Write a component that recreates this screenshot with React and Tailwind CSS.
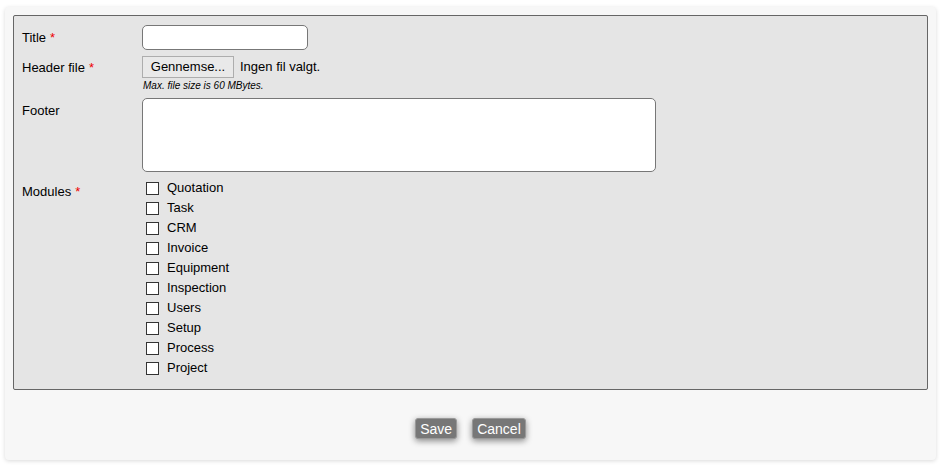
import React, { useState } from "react";

const MODULES = [
  "Quotation",
  "Task",
  "CRM",
  "Invoice",
  "Equipment",
  "Inspection",
  "Users",
  "Setup",
  "Process",
  "Project",
];

const Required = () => <span className="text-[#e00] ml-1">*</span>;

const App = () => {
  const [title, setTitle] = useState("");
  const [footer, setFooter] = useState("");
  const [modules, setModules] = useState([]);

  const toggleModule = (name) => {
    setModules((prev) =>
      prev.includes(name) ? prev.filter((m) => m !== name) : [...prev, name]
    );
  };

  return (
    <div className="min-h-screen bg-white pt-[7px] pl-[5px] pr-[6px] font-['Liberation_Sans',Arial,sans-serif] text-[13px] text-black">
      <div className="bg-[#f7f7f7] rounded-[4px] shadow-[0_1px_4px_rgba(0,0,0,0.15)] p-2 pb-[21px]">
        <fieldset className="bg-[#e5e5e5] border border-[#666] rounded-[2px] pl-2 pt-[9px] pb-[11px]">
          <div className="grid grid-cols-[120px_1fr] gap-y-[6px]">
            <label className="flex items-center">
              Title
              <Required />
            </label>
            <div>
              <input
                type="text"
                value={title}
                onChange={(e) => setTitle(e.target.value)}
                className="block w-[166px] h-[25px] bg-white border border-[#777] rounded-[5px] px-1 outline-none"
              />
            </div>

            <label className="pt-[2px]">
              Header file
              <Required />
            </label>
            <div>
              <div className="flex items-center">
                <button className="h-[22px] w-[92px] bg-[#e9e9e9] border border-[#adadad] text-[13px]">
                  Gennemse...
                </button>
                <span className="ml-[6px]">Ingen fil valgt.</span>
              </div>
              <p className="italic text-[10px] leading-[12px] mt-[2px] ml-px">
                Max. file size is 60 MBytes.
              </p>
            </div>

            <label className="pt-[3px]">Footer</label>
            <div>
              <textarea
                value={footer}
                onChange={(e) => setFooter(e.target.value)}
                className="block w-[514px] h-[74px] bg-white border border-[#777] rounded-[5px] p-1 resize-none outline-none"
              />
            </div>

            <label className="pt-[4px]">
              Modules
              <Required />
            </label>
            <div>
              {MODULES.map((name) => (
                <label key={name} className="flex items-center h-[20px] cursor-pointer">
                  <input
                    type="checkbox"
                    checked={modules.includes(name)}
                    onChange={() => toggleModule(name)}
                    className="appearance-none w-[13px] h-[13px] ml-1 bg-white border border-[#333] checked:bg-[#555]"
                  />
                  <span className="ml-[8px]">{name}</span>
                </label>
              ))}
            </div>
          </div>
        </fieldset>

        <div className="flex justify-center gap-[15px] mt-[28px]">
          <button className="h-[21px] px-[4px] bg-[#777] text-white text-[14px] rounded-[3px] border border-[#999] shadow-[0_2px_6px_rgba(0,0,0,0.45)]">
            Save
          </button>
          <button className="h-[21px] px-[4px] bg-[#777] text-white text-[14px] rounded-[3px] border border-[#999] shadow-[0_2px_6px_rgba(0,0,0,0.45)]">
            Cancel
          </button>
        </div>
      </div>
    </div>
  );
};

export default App;
